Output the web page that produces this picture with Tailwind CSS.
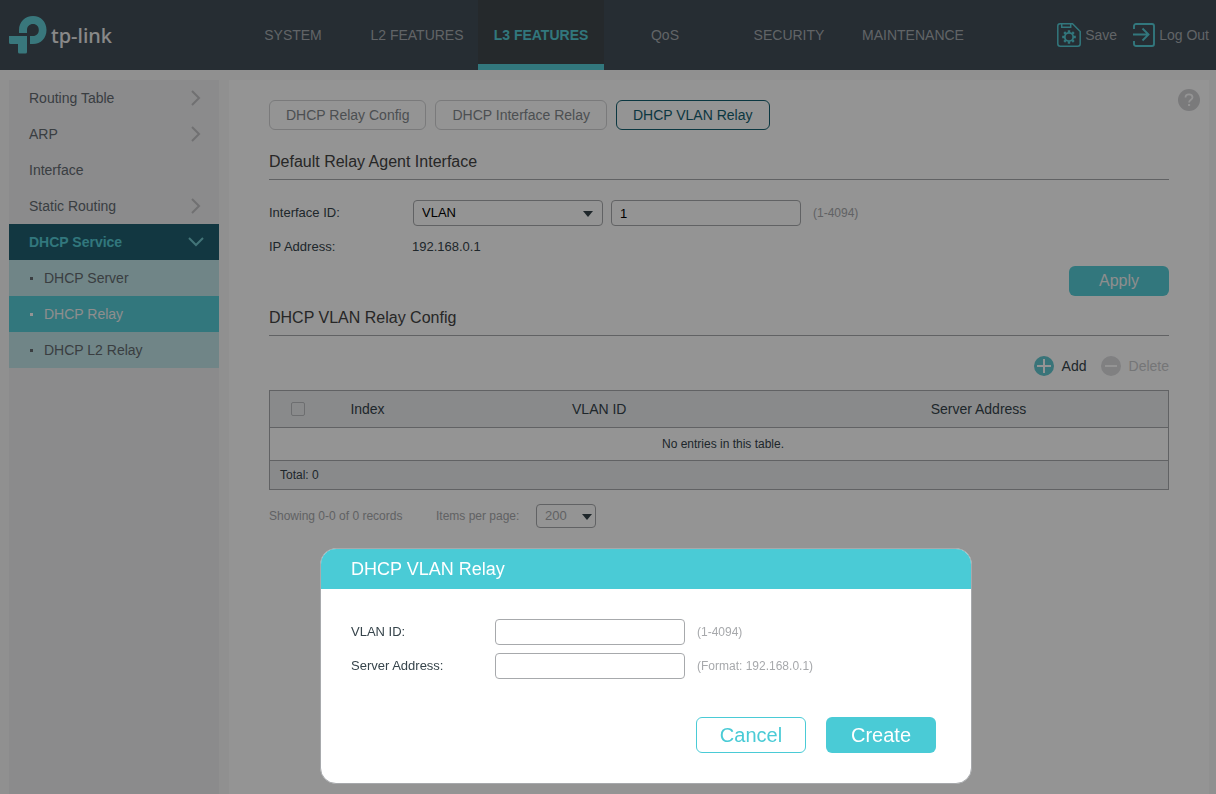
<!DOCTYPE html>
<html lang="en">
<head>
    <meta charset="UTF-8">
    <meta name="viewport" content="width=device-width, initial-scale=1.0">
    <title>TP-Link - DHCP VLAN Relay</title>
    <script src="https://cdn.jsdelivr.net/npm/@tailwindcss/browser@4"></script>
</head>
<body class="min-h-screen flex flex-col bg-[#f8f8f8] font-['Liberation_Sans',Arial,sans-serif] text-[13px] text-[#36444b]">

    <!-- Top Bar -->
    <header class="flex h-[70px] bg-[#424e58] text-sm text-[#a8adb2]">
        <a href="#" class="flex w-[231px] shrink-0 pl-[9px] pt-4 text-[#ececec]" aria-label="tp-link">
            <svg width="38" height="38" viewBox="0 0 38 38" fill="#62cdd6">
                <path d="M0 20h18v16q0 1.500-1.500 1.500h-6q-1.500 0-1.500-1.500v-8H1.500Q0 28 0 26.500z"/>
                <path d="M10 17v-3C10 6 16 0 24 0s13.500 6 13.500 14S32 28 24 28h-3v-8h3c3.500 0 5.800-2.500 5.800-6S27.500 8 24 8s-6 2.500-6 6v3z"/>
            </svg>
            <span class="pl-1 pt-1.5 font-['Noto_Sans',sans-serif] text-xl font-medium leading-7">tp-link</span>
        </a>
        <nav class="flex flex-1">
            <a href="#" class="flex w-[124px] items-center justify-center">SYSTEM</a>
            <a href="#" class="flex w-[124px] items-center justify-center">L2 FEATURES</a>
            <a href="#" class="-mx-px flex w-[126px] items-center justify-center border-b-6 border-[#56cdd7] bg-[#40484c] pt-1.5 font-bold text-[#56cdd7]">L3 FEATURES</a>
            <a href="#" class="flex w-[124px] items-center justify-center">QoS</a>
            <a href="#" class="flex w-[124px] items-center justify-center">SECURITY</a>
            <a href="#" class="flex w-[124px] items-center justify-center">MAINTENANCE</a>
        </nav>
        <div class="flex items-center gap-4 pr-[7px]">
            <button class="flex items-center gap-1">
                <svg width="24" height="24" viewBox="0 0 24 24" fill="none" stroke="#56cdd7" stroke-width="1.500">
                    <path d="M3 .8h12.500l7.700 7.700v12.200a2.500 2.500 0 0 1-2.500 2.500H3.300a2.500 2.500 0 0 1-2.500-2.500V3A2.200 2.200 0 0 1 3 .8z"/>
                    <path d="M4.700 1v3.300h9V1"/>
                    <circle cx="12" cy="14" r="4.200" stroke-width="1.800"/>
                    <path stroke-width="2.400" d="M12 7.200v2.300M12 18.500v2.300M5.200 14h2.300M16.500 14h2.300M7.200 9.200l1.600 1.600M15.200 17.200l1.600 1.600M7.200 18.800l1.600-1.600M15.200 10.800l1.600-1.600"/>
                </svg>
                Save
            </button>
            <button class="flex items-center gap-1">
                <svg width="22" height="24" viewBox="0 0 22 24" fill="none" stroke="#56cdd7" stroke-width="1.900">
                    <path d="M1 6V3a2 2 0 0 1 2-2h16a2 2 0 0 1 2 2v18a2 2 0 0 1-2 2H3a2 2 0 0 1-2-2v-3"/>
                    <path d="M0 11.500h15M9.500 5.500l6 6-6 6"/>
                </svg>
                Log Out
            </button>
        </div>
    </header>

    <div class="flex flex-1 gap-2.5 pl-[9px] pr-[7px] pt-2.5">
        <!-- Side Menu -->
        <aside class="w-[210px] shrink-0 bg-[#efeff1] text-sm text-[#646b71]">
            <a href="#" class="flex h-9 items-center justify-between pl-5 pr-[18px]">Routing Table
                <svg width="10" height="16" viewBox="0 0 10 16" fill="none" stroke="#c2c2c4" stroke-width="2"><path d="M1 1l7 7-7 7"/></svg>
            </a>
            <a href="#" class="flex h-9 items-center justify-between pl-5 pr-[18px]">ARP
                <svg width="10" height="16" viewBox="0 0 10 16" fill="none" stroke="#c2c2c4" stroke-width="2"><path d="M1 1l7 7-7 7"/></svg>
            </a>
            <a href="#" class="flex h-9 items-center pl-5">Interface</a>
            <a href="#" class="flex h-9 items-center justify-between pl-5 pr-[18px]">Static Routing
                <svg width="10" height="16" viewBox="0 0 10 16" fill="none" stroke="#c2c2c4" stroke-width="2"><path d="M1 1l7 7-7 7"/></svg>
            </a>
            <a href="#" class="flex h-9 items-center justify-between bg-[#206070] pl-5 pr-[15px] font-bold text-[#56cdd7]">DHCP Service
                <svg width="16" height="10" viewBox="0 0 16 10" fill="none" stroke="#72c8cf" stroke-width="2"><path d="M1 1l7 7 7-7"/></svg>
            </a>
            <a href="#" class="flex h-9 items-center gap-[11px] bg-[#c1e6e8] pl-[21px]"><i class="size-[3px] bg-[#646b71]"></i>DHCP Server</a>
            <a href="#" class="flex h-9 items-center gap-[11px] bg-[#56cdd7] pl-[21px] text-[#f4f4f4]"><i class="size-[3px] bg-white"></i>DHCP Relay</a>
            <a href="#" class="flex h-9 items-center gap-[11px] bg-[#c1e6e8] pl-[21px]"><i class="size-[3px] bg-[#646b71]"></i>DHCP L2 Relay</a>
        </aside>

        <!-- Content -->
        <main class="relative flex-1 bg-white px-10 pt-5">
            <button aria-label="Help" class="absolute right-[9px] top-[9px]">
                <svg width="22" height="22" viewBox="0 0 22 22" fill="none">
                    <circle cx="11" cy="11" r="11" fill="#d2d2d5"/>
                    <path d="M7.500 8.500C7.500 6.300 9 5.300 11 5.300s3.500 1.100 3.500 3.100c0 2.300-3.400 2.500-3.400 5.200" stroke="#fff" stroke-width="1.800"/>
                    <path d="M10.100 15h2v2h-2z" fill="#fff"/>
                </svg>
            </button>

            <div class="flex gap-[9px] text-sm text-[#84898d]">
                <button class="h-[30px] rounded-md border border-[#d2d3d5] px-4">DHCP Relay Config</button>
                <button class="h-[30px] rounded-md border border-[#d2d3d5] px-4">DHCP Interface Relay</button>
                <button class="h-[30px] rounded-md border border-[#146070] px-4 text-[#146070]">DHCP VLAN Relay</button>
            </div>

            <h2 class="mt-5 border-b border-[#a7a9ac] pb-[5px] text-base text-[#444]">Default Relay Agent Interface</h2>
            <div class="mt-5 flex h-[26px] items-center gap-2">
                <label for="ifType" class="w-[136px]">Interface ID:</label>
                <div class="relative">
                    <select id="ifType" class="h-[26px] w-[190px] appearance-none rounded border border-[#a7a9ac] px-2 text-black">
                        <option>VLAN</option>
                    </select>
                    <svg class="pointer-events-none absolute right-2.5 top-[11px]" width="10" height="6" viewBox="0 0 10 6" fill="#36444b"><path d="M0 0h10L5 6z"/></svg>
                </div>
                <input id="ifId" type="text" value="1" aria-label="Interface number" class="h-[26px] w-[190px] rounded border border-[#a7a9ac] px-2 text-black">
                <span class="pl-1 text-xs text-[#a7a9ac]">(1-4094)</span>
            </div>
            <div class="mt-2 flex h-[26px] items-center">
                <span class="w-[143px]">IP Address:</span>
                <span>192.168.0.1</span>
            </div>
            <div class="mt-1.5 flex justify-end">
                <button class="h-[30px] w-[100px] rounded-md bg-[#56cdd7] text-base text-[#f4f4f4]">Apply</button>
            </div>

            <h2 class="mt-2.5 border-b border-[#a7a9ac] pb-[5px] text-base text-[#444]">DHCP VLAN Relay Config</h2>
            <div class="mt-5 flex justify-end gap-3.5 text-sm">
                <button class="flex items-center gap-2">
                    <svg width="20" height="20" viewBox="0 0 20 20"><circle cx="10" cy="10" r="10" fill="#62c8d0"/><path d="M3 10h14M10 3v14" stroke="#fff" stroke-width="2"/></svg>
                    Add
                </button>
                <button disabled class="flex items-center gap-2 text-[#cacbce]">
                    <svg width="20" height="20" viewBox="0 0 20 20"><circle cx="10" cy="10" r="10" fill="#dcdcdf"/><path d="M4 10h12" stroke="#fff" stroke-width="2"/></svg>
                    Delete
                </button>
            </div>

            <table class="mt-3.5 w-full table-fixed border-collapse border border-[#a7a9ac] text-xs">
                <colgroup><col class="w-[56px]"><col class="w-[84px]"><col><col></colgroup>
                <thead>
                    <tr class="h-[37px] bg-[#eceef0] text-sm">
                        <th><input type="checkbox" aria-label="Select all" class="block ml-[21px] size-3.5 appearance-none rounded-xs border border-[#bcbec1]"></th>
                        <th class="font-normal">Index</th>
                        <th class="font-normal">VLAN ID</th>
                        <th class="font-normal">Server Address</th>
                    </tr>
                </thead>
                <tbody>
                    <tr class="h-[33px] border-y border-[#a7a9ac]"><td colspan="4" class="pl-2 text-center">No entries in this table.</td></tr>
                </tbody>
                <tfoot>
                    <tr class="h-[29px] bg-[#eceef0]"><td colspan="4" class="pl-2.5">Total: 0</td></tr>
                </tfoot>
            </table>

            <div class="mt-3.5 flex items-center text-xs text-[#a7a9ac]">
                <span class="w-[167px]">Showing 0-0 of 0 records</span>
                <label for="pageSize" class="w-[100px]">Items per page:</label>
                <div class="relative">
                    <select id="pageSize" class="h-6 w-[60px] appearance-none rounded border border-[#a7a9ac] px-2 text-[13px]">
                        <option>200</option>
                    </select>
                    <svg class="pointer-events-none absolute right-1 top-2.5" width="10" height="6" viewBox="0 0 10 6" fill="#36444b"><path d="M0 0h10L5 6z"/></svg>
                </div>
            </div>
        </main>
    </div>

    <!-- Relay Dialog -->
    <div class="fixed inset-0 bg-black/42">
        <form role="dialog" aria-labelledby="dlgTitle" class="absolute bottom-2.5 left-80 w-[652px] overflow-hidden rounded-2xl border border-[#a7a9ac] bg-white">
            <h1 id="dlgTitle" class="h-10 bg-[#4acbd6] pl-[30px] text-lg leading-10 text-white">DHCP VLAN Relay</h1>
            <div class="px-[30px] pt-[30px]">
                <div class="flex h-[26px] items-center">
                    <label for="vlanId" class="w-36">VLAN ID:</label>
                    <input id="vlanId" type="text" class="h-[26px] w-[190px] rounded border border-[#a7a9ac] px-2">
                    <span class="pl-3 text-xs text-[#a7a9ac]">(1-4094)</span>
                </div>
                <div class="mt-2 flex h-[26px] items-center">
                    <label for="serverAddr" class="w-36">Server Address:</label>
                    <input id="serverAddr" type="text" class="h-[26px] w-[190px] rounded border border-[#a7a9ac] px-2">
                    <span class="pl-3 text-xs text-[#a7a9ac]">(Format: 192.168.0.1)</span>
                </div>
            </div>
            <div class="flex justify-end gap-5 pb-[30px] pr-[35px] pt-[38px] text-xl">
                <button type="button" class="h-9 w-[110px] rounded-md border border-[#4acbd6] text-[#4acbd6]">Cancel</button>
                <button type="submit" class="h-9 w-[110px] rounded-md bg-[#4acbd6] text-white">Create</button>
            </div>
        </form>
    </div>
</body>
</html>
